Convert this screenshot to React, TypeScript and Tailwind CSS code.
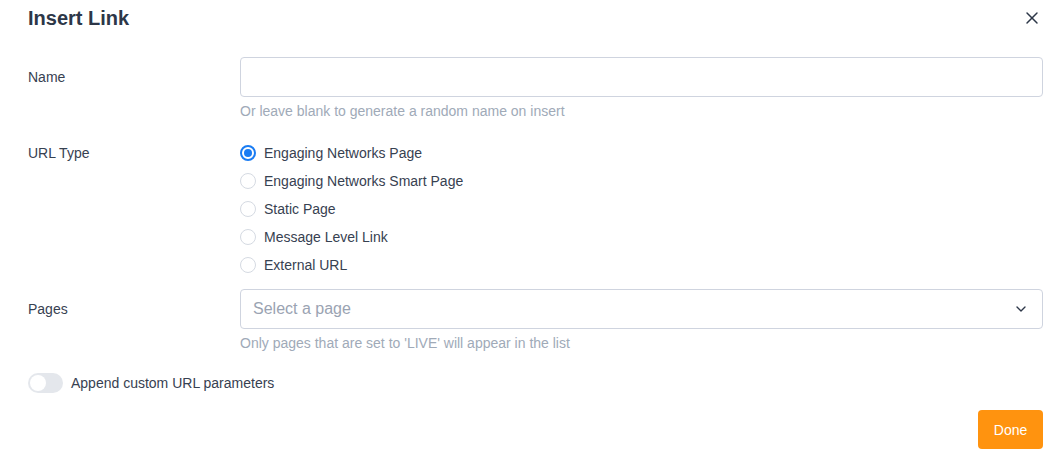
import React, { useState } from "react";
import { X, ChevronDown } from "lucide-react";

const urlTypes = [
    "Engaging Networks Page",
    "Engaging Networks Smart Page",
    "Static Page",
    "Message Level Link",
    "External URL",
];

export default function App() {
    const [urlType, setUrlType] = useState(0);
    const [append, setAppend] = useState(false);

    return (
        <div className="w-[1062px] h-[469px] bg-white pl-7 pr-[19px] font-['Liberation_Sans',Arial,sans-serif] text-[#374151]">
            <div className="flex items-center justify-between h-[36px]">
                <h1 className="text-[20px] font-bold text-[#2d3748]">Insert Link</h1>
                <button className="text-[#2d3748] mr-[1px]">
                    <X className="w-5 h-5" strokeWidth={1.75} />
                </button>
            </div>

            <div className="flex mt-[21px]">
                <div className="w-[212px] h-[40px] flex items-center text-sm">Name</div>
                <div className="flex-1">
                    <input type="text" className="w-full h-[40px] rounded border border-[#cfd4df] px-3 text-base outline-none" />
                    <p className="mt-1 h-5 text-sm leading-5 text-[#a0aab8]">Or leave blank to generate a random name on insert</p>
                </div>
            </div>

            <div className="flex mt-[18px]">
                <div className="w-[212px] h-[28px] flex items-center text-sm">URL Type</div>
                <div className="flex-1 flex flex-col">
                    {urlTypes.map((t, i) => (
                        <label key={t} className="h-[28px] flex items-center gap-2 text-sm cursor-pointer" onClick={() => setUrlType(i)}>
                            {urlType === i ? (
                                <span className="w-4 h-4 rounded-full border-2 border-[#1a7cf3] flex items-center justify-center">
                                    <span className="w-2 h-2 rounded-full bg-[#1a7cf3]" />
                                </span>
                            ) : (
                                <span className="w-4 h-4 rounded-full border border-[#d5dae2]" />
                            )}
                            {t}
                        </label>
                    ))}
                </div>
            </div>

            <div className="flex mt-[10px]">
                <div className="w-[212px] h-[40px] flex items-center text-sm">Pages</div>
                <div className="flex-1">
                    <div className="h-[40px] rounded border border-[#cfd4df] pl-3 pr-[13px] flex items-center justify-between">
                        <span className="text-base text-[#9aa3b2]">Select a page</span>
                        <ChevronDown className="w-4 h-4 text-[#2d3748]" strokeWidth={2} />
                    </div>
                    <p className="mt-1 h-5 text-sm leading-5 text-[#a0aab8]">Only pages that are set to 'LIVE' will appear in the list</p>
                </div>
            </div>

            <div className="flex items-center gap-2 mt-[20px] h-[20px]">
                <button
                    onClick={() => setAppend(!append)}
                    className={`w-[35px] h-[20px] rounded-full p-[2px] flex ${append ? "bg-[#1a7cf3] justify-end" : "bg-[#e4e7ec] justify-start"}`}
                >
                    <span className="w-4 h-4 rounded-full bg-white" />
                </button>
                <span className="text-sm">Append custom URL parameters</span>
            </div>

            <div className="flex justify-end mt-[17px]">
                <button className="w-[65px] h-[39px] rounded bg-[#ff930f] text-white text-sm">Done</button>
            </div>
        </div>
    );
}
